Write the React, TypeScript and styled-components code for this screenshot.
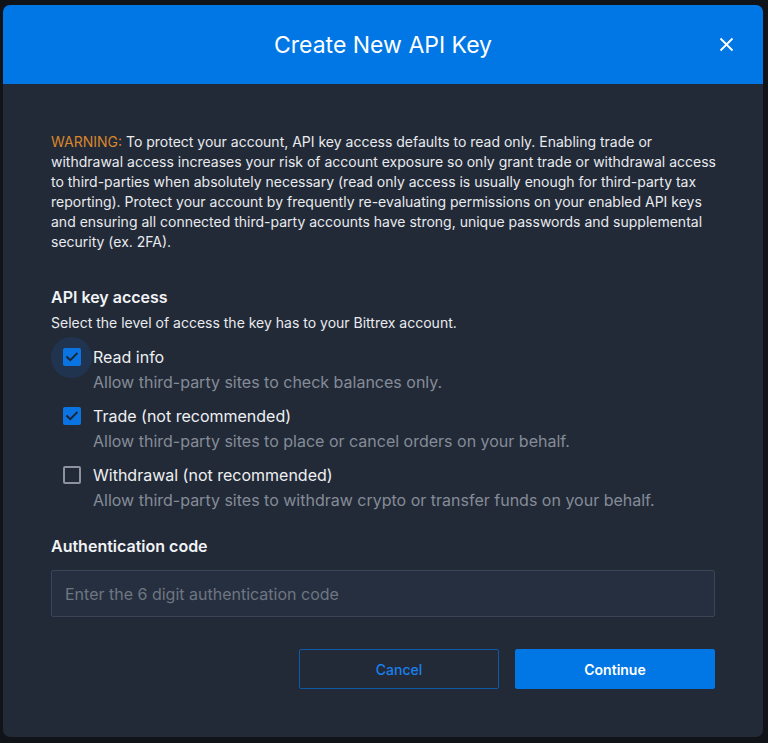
import React from "react";
import styled, { createGlobalStyle } from "styled-components";

const Global = createGlobalStyle`
  html, body { margin: 0; padding: 0; background: #101318; }
  body { font-family: Inter, "Noto Sans", sans-serif; -webkit-font-smoothing: antialiased; }
  * { box-sizing: border-box; }
`;

const Page = styled.div`
  width: 768px;
  height: 743px;
  padding: 5px 5px 0 3px;
  background: #101318;
`;

const Modal = styled.div`
  width: 760px;
  height: 732px;
  background: #222a38;
  border-radius: 7px;
  overflow: hidden;
  display: flex;
  flex-direction: column;
`;

const Header = styled.div`
  height: 80px;
  background: #0077e5;
  display: grid;
  grid-template-columns: 1fr auto 1fr;
  align-items: center;
`;

const Title = styled.h1`
  grid-column: 2;
  margin: 0;
  font-size: 23px;
  font-weight: 400;
  color: #ffffff;
`;

const Close = styled.button`
  grid-column: 3;
  justify-self: end;
  margin-right: 25px;
  width: 24px;
  height: 24px;
  padding: 0;
  border: none;
  background: transparent;
  display: flex;
  align-items: center;
  justify-content: center;
  cursor: pointer;
`;

const Body = styled.div`
  padding: 48px;
  display: flex;
  flex-direction: column;
`;

const Warning = styled.p`
  margin: 0;
  font-size: 14px;
  line-height: 20px;
  color: #e9ebee;
  white-space: nowrap;
`;

const WarnLabel = styled.span`
  color: #d9862a;
`;

const SectionTitle = styled.h2<{ $top: number }>`
  margin: ${(p) => p.$top}px 0 0;
  font-size: 16px;
  line-height: 24px;
  font-weight: 600;
  color: #f1f3f5;
`;

const Hint = styled.p`
  margin: 4px 0 0;
  font-size: 14px;
  line-height: 20px;
  color: #e9ebee;
`;

const Options = styled.div`
  margin-top: 13px;
  display: flex;
  flex-direction: column;
  gap: 13px;
`;

const Option = styled.label`
  display: grid;
  grid-template-columns: 18px 1fr;
  column-gap: 12px;
  row-gap: 4px;
  padding-left: 12px;
  cursor: pointer;
`;

const BoxWrap = styled.span`
  position: relative;
  width: 18px;
  height: 22px;
  display: flex;
  align-items: center;
`;

const Halo = styled.span`
  position: absolute;
  left: -12px;
  top: -9px;
  width: 41px;
  height: 41px;
  border-radius: 50%;
  background: rgba(30, 64, 110, 0.45);
`;

const Box = styled.span<{ $checked: boolean }>`
  position: relative;
  width: 18px;
  height: 18px;
  border-radius: 2px;
  display: flex;
  align-items: center;
  justify-content: center;
  background: ${(p) => (p.$checked ? "#0a74e2" : "transparent")};
  border: ${(p) => (p.$checked ? "none" : "2px solid #8d939c")};
`;

const OptLabel = styled.span`
  font-size: 16px;
  line-height: 22px;
  color: #eef0f2;
`;

const OptDesc = styled.span`
  grid-column: 2;
  font-size: 16px;
  line-height: 20px;
  color: #858c97;
`;

const Input = styled.input`
  margin-top: 12px;
  height: 47px;
  width: 100%;
  background: #262f3f;
  border: 1px solid #3a4558;
  border-radius: 2px;
  padding: 0 13px;
  font-family: Inter, "Noto Sans", sans-serif;
  font-size: 16px;
  color: #e9ebee;
  outline: none;
  &::placeholder { color: #6e7682; }
`;

const Actions = styled.div`
  margin-top: 32px;
  display: flex;
  justify-content: flex-end;
  gap: 16px;
`;

const Button = styled.button<{ $primary?: boolean }>`
  width: 200px;
  height: 40px;
  border-radius: 2px;
  font-family: Inter, "Noto Sans", sans-serif;
  font-size: 14px;
  font-weight: ${(p) => (p.$primary ? 600 : 500)};
  cursor: pointer;
  background: ${(p) => (p.$primary ? "#0077e5" : "transparent")};
  color: ${(p) => (p.$primary ? "#ffffff" : "#1a80ec")};
  border: 1px solid ${(p) => (p.$primary ? "#0077e5" : "#0c5aa8")};
`;

const Check = () => (
  <svg width="12" height="10" viewBox="0 0 12 10">
    <path d="M1.2 5.2 L4.3 8.2 L10.8 1.6" fill="none" stroke="#1c2533" strokeWidth="2" strokeLinecap="square" />
  </svg>
);

const options = [
  { label: "Read info", desc: "Allow third-party sites to check balances only.", checked: true, focus: true },
  { label: "Trade (not recommended)", desc: "Allow third-party sites to place or cancel orders on your behalf.", checked: true, focus: false },
  { label: "Withdrawal (not recommended)", desc: "Allow third-party sites to withdraw crypto or transfer funds on your behalf.", checked: false, focus: false },
];

export default function App() {
  return (
    <Page>
      <Global />
      <Modal>
        <Header>
          <Title>Create New API Key</Title>
          <Close aria-label="Close">
            <svg width="15" height="15" viewBox="0 0 15 15">
              <path d="M1.5 1.5 L13.5 13.5 M13.5 1.5 L1.5 13.5" stroke="#fff" strokeWidth="1.8" />
            </svg>
          </Close>
        </Header>
        <Body>
          <Warning>
            <WarnLabel>WARNING:</WarnLabel> To protect your account, API key access defaults to read only. Enabling trade or
            <br />
            withdrawal access increases your risk of account exposure so only grant trade or withdrawal access
            <br />
            to third-parties when absolutely necessary (read only access is usually enough for third-party tax
            <br />
            reporting). Protect your account by frequently re-evaluating permissions on your enabled API keys
            <br />
            and ensuring all connected third-party accounts have strong, unique passwords and supplemental
            <br />
            security (ex. 2FA).
          </Warning>
          <SectionTitle $top={33}>API key access</SectionTitle>
          <Hint>Select the level of access the key has to your Bittrex account.</Hint>
          <Options>
            {options.map((o) => (
              <Option key={o.label}>
                <BoxWrap>
                  {o.focus && <Halo />}
                  <Box $checked={o.checked}>{o.checked && <Check />}</Box>
                </BoxWrap>
                <OptLabel>{o.label}</OptLabel>
                <OptDesc>{o.desc}</OptDesc>
              </Option>
            ))}
          </Options>
          <SectionTitle $top={24}>Authentication code</SectionTitle>
          <Input placeholder="Enter the 6 digit authentication code" />
          <Actions>
            <Button>Cancel</Button>
            <Button $primary>Continue</Button>
          </Actions>
        </Body>
      </Modal>
    </Page>
  );
}
